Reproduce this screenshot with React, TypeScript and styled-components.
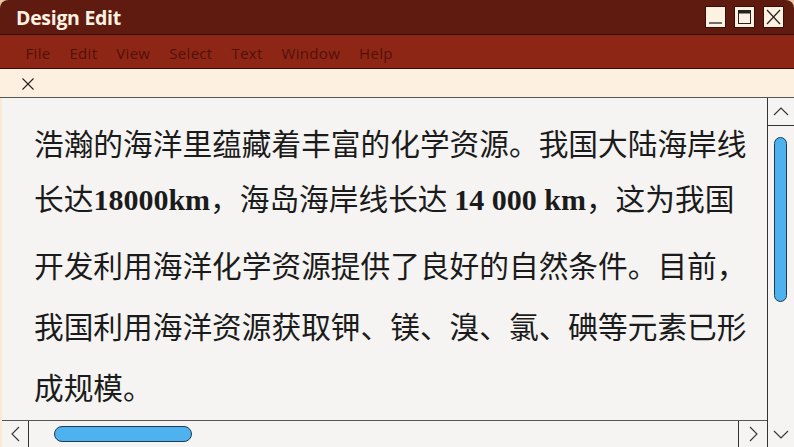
import React from "react";
import styled, { createGlobalStyle } from "styled-components";

const Global = createGlobalStyle`
  html, body { margin: 0; padding: 0; background: #e9c9a0; }
  body { width: 794px; height: 447px; overflow: hidden; }
  #root { width: 794px; height: 447px; }
`;

const Window = styled.div`
  width: 794px;
  height: 447px;
  display: flex;
  flex-direction: column;
  border-radius: 8px 8px 0 0;
  overflow: hidden;
  background: #f5f4f2;
`;

const TitleBar = styled.div`
  height: 34px;
  flex: none;
  background: #5f1b0f;
  border-bottom: 1px solid #3a0e07;
  display: flex;
  align-items: center;
  justify-content: space-between;
  padding: 0 10px 0 16px;
`;

const Title = styled.div`
  font-family: "Open Sans", "Noto Sans", sans-serif;
  font-weight: 700;
  font-size: 19.5px;
  color: #fdf1e2;
  letter-spacing: -0.3px;
  padding-top: 1px;
`;

const Controls = styled.div`
  display: flex;
  gap: 8px;
  align-items: center;
  padding-bottom: 1px;
`;

const CtrlButton = styled.div`
  width: 19px;
  height: 20px;
  background: #fdf1e2;
  border: 1px solid #3a0e07;
  display: flex;
  align-items: center;
  justify-content: center;
`;

const MenuBar = styled.div`
  height: 34px;
  flex: none;
  background: #8e2616;
  border-bottom: 1px solid #3a0e07;
  display: flex;
  align-items: center;
  padding-left: 16px;
  padding-top: 3px;
  box-sizing: border-box;
`;

const MenuItem = styled.div`
  font-family: "Open Sans", "Noto Sans", sans-serif;
  font-size: 15px;
  color: #521109;
  padding: 0 9.5px;
  letter-spacing: 0.3px;
`;

const TabBar = styled.div`
  height: 29px;
  flex: none;
  background: #fdf0e0;
  border-bottom: 1px solid #555;
  display: flex;
  align-items: center;
  padding-left: 22px;
  padding-top: 2px;
  box-sizing: border-box;
`;

const Body = styled.div`
  flex: 1;
  display: flex;
  min-height: 0;
  border-left: 2px solid #fbe9d4;
`;

const MainCol = styled.div`
  flex: 1;
  display: flex;
  flex-direction: column;
  min-width: 0;
`;

const Content = styled.div`
  flex: 1;
  padding: 14px 0 0 32px;
  overflow: hidden;
  color: #1b1b1b;
`;

const Line = styled.div<{ $nudge?: number }>`
  font-family: "Noto Sans CJK SC", "Liberation Serif", serif;
  font-size: 29.7px;
  line-height: 61px;
  height: 61px;
  white-space: nowrap;
  margin-top: ${(p) => p.$nudge ?? 0}px;
`;

const Latin = styled.span`
  font-family: "Liberation Serif", serif;
  font-weight: 700;
  font-size: 30px;
`;

const HScroll = styled.div`
  height: 26px;
  flex: none;
  border-top: 1px solid #555;
  display: flex;
  align-items: stretch;
`;

const ArrowBtn = styled.div<{ $side: "left" | "right" | "bottom" | "top" }>`
  flex: none;
  display: flex;
  align-items: center;
  justify-content: center;
  ${(p) => (p.$side === "left" ? "width: 26px; border-right: 1px solid #333;" : "")}
  ${(p) => (p.$side === "right" ? "width: 28px; border-left: 1px solid #333;" : "")}
  ${(p) => (p.$side === "top" ? "height: 27px; border-bottom: 1px solid #333;" : "")}
  ${(p) => (p.$side === "bottom" ? "height: 26px; margin-top: auto;" : "")}
`;

const HTrack = styled.div`
  flex: 1;
  display: flex;
  align-items: center;
  padding-left: 25px;
`;

const HThumb = styled.div`
  width: 136px;
  height: 14px;
  background: #4db2ee;
  border: 1px solid #1f3b52;
  border-radius: 8px;
`;

const VScroll = styled.div`
  width: 26px;
  flex: none;
  border-left: 1px solid #333;
  display: flex;
  flex-direction: column;
`;

const VTrack = styled.div`
  display: flex;
  justify-content: center;
  padding-top: 11px;
  padding-right: 1px;
`;

const VThumb = styled.div`
  width: 11px;
  height: 163px;
  background: #4db2ee;
  border: 1px solid #1f3b52;
  border-radius: 7px;
`;

const Chevron = ({ dir }: { dir: "up" | "down" | "left" | "right" }) => {
  const pts = {
    up: "1,9 8,2 15,9",
    down: "1,2 8,9 15,2",
    left: "9,1 2,8 9,15",
    right: "2,1 9,8 2,15",
  }[dir];
  const vert = dir === "up" || dir === "down";
  return (
    <svg width={vert ? 16 : 11} height={vert ? 11 : 16} viewBox={vert ? "0 0 16 11" : "0 0 11 16"}>
      <polyline points={pts} fill="none" stroke="#333" strokeWidth="1.1" />
    </svg>
  );
};

export default function App() {
  return (
    <>
      <Global />
      <Window>
        <TitleBar>
          <Title>Design Edit</Title>
          <Controls>
            <CtrlButton>
              <svg width="19" height="20" viewBox="0 0 19 20">
                <line x1="3" y1="16" x2="16" y2="16" stroke="#333" strokeWidth="1.4" />
              </svg>
            </CtrlButton>
            <CtrlButton>
              <svg width="19" height="20" viewBox="0 0 19 20">
                <rect x="3.5" y="3.5" width="12" height="13" fill="none" stroke="#222" strokeWidth="1" />
                <rect x="3" y="3" width="13" height="3.5" fill="#222" />
              </svg>
            </CtrlButton>
            <CtrlButton>
              <svg width="19" height="20" viewBox="0 0 19 20">
                <line x1="3" y1="3" x2="16" y2="17" stroke="#222" strokeWidth="1.2" />
                <line x1="16" y1="3" x2="3" y2="17" stroke="#222" strokeWidth="1.2" />
              </svg>
            </CtrlButton>
          </Controls>
        </TitleBar>
        <MenuBar>
          {["File", "Edit", "View", "Select", "Text", "Window", "Help"].map((m) => (
            <MenuItem key={m}>{m}</MenuItem>
          ))}
        </MenuBar>
        <TabBar>
          <svg width="12" height="12" viewBox="0 0 12 12">
            <line x1="0.5" y1="0.5" x2="11.5" y2="11.5" stroke="#222" strokeWidth="1.1" />
            <line x1="11.5" y1="0.5" x2="0.5" y2="11.5" stroke="#222" strokeWidth="1.1" />
          </svg>
        </TabBar>
        <Body>
          <MainCol>
            <Content>
              <Line>浩瀚的海洋里蕴藏着丰富的化学资源。我国大陆海岸线</Line>
              <Line $nudge={-6}>
                长达<Latin>18000km</Latin>，海岛海岸线长达 <Latin>14 000 km</Latin>，这为我国
              </Line>
              <Line $nudge={6}>开发利用海洋化学资源提供了良好的自然条件。目前，</Line>
              <Line>我国利用海洋资源获取钾、镁、溴、氯、碘等元素已形</Line>
              <Line>成规模。</Line>
            </Content>
            <HScroll>
              <ArrowBtn $side="left">
                <Chevron dir="left" />
              </ArrowBtn>
              <HTrack>
                <HThumb />
              </HTrack>
              <ArrowBtn $side="right">
                <Chevron dir="right" />
              </ArrowBtn>
            </HScroll>
          </MainCol>
          <VScroll>
            <ArrowBtn $side="top">
              <Chevron dir="up" />
            </ArrowBtn>
            <VTrack>
              <VThumb />
            </VTrack>
            <ArrowBtn $side="bottom">
              <Chevron dir="down" />
            </ArrowBtn>
          </VScroll>
        </Body>
      </Window>
    </>
  );
}
